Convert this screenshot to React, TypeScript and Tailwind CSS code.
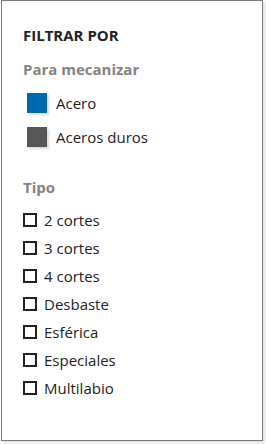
import React from 'react';

const colores = [
  { label: 'Acero', color: 'bg-[#0067b1]' },
  { label: 'Aceros duros', color: 'bg-[#565656]' },
];

const tipos = ['2 cortes', '3 cortes', '4 cortes', 'Desbaste', 'Esférica', 'Especiales', 'Multilabio'];

export default function App() {
  return (
    <div className="w-[266px] h-[444px] bg-white font-['Open_Sans',sans-serif]">
      <div className="ml-px w-[262px] h-[441px] border border-[#7a7a7a] bg-white shadow-[2px_2px_2px_rgba(0,0,0,0.12)] px-[21px] pt-[24px]">
        <h2 className="text-[15px] font-bold text-[#222] leading-5">FILTRAR POR</h2>

        <h3 className="mt-[14px] text-[15px] font-bold text-[#838383] leading-5">Para mecanizar</h3>
        <ul className="mt-[14px] flex flex-col gap-[14px]">
          {colores.map((c) => (
            <li key={c.label} className="flex items-center">
              <span className={`ml-[4px] w-5 h-5 ${c.color} shadow-[2px_2px_2px_rgba(0,0,0,0.15)]`}></span>
              <span className="ml-[9px] text-[15px] text-[#222] leading-5">{c.label}</span>
            </li>
          ))}
        </ul>

        <h3 className="mt-[30px] text-[15px] font-bold text-[#838383] leading-5">Tipo</h3>
        <ul className="mt-[13px] flex flex-col gap-2">
          {tipos.map((t) => (
            <li key={t} className="flex items-center">
              <span className="w-[14px] h-[14px] border-2 border-[#222]"></span>
              <span className="ml-[7px] text-[15px] text-[#222] leading-5">{t}</span>
            </li>
          ))}
        </ul>
      </div>
    </div>
  );
}
